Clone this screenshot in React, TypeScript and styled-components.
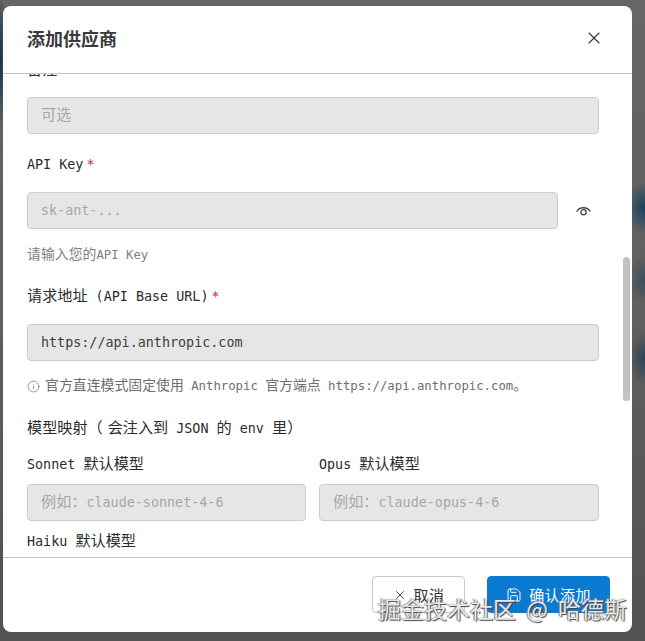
import React from "react";
import styled, { createGlobalStyle } from "styled-components";
import { X, Info, Save } from "lucide-react";

const Global = createGlobalStyle`
  html, body { margin: 0; padding: 0; }
  body { width: 645px; height: 641px; overflow: hidden; }
`;
const MONO = `"DejaVu Sans Mono", "Noto Sans CJK SC", monospace`;

const Backdrop = styled.div`
  position: relative; width: 645px; height: 641px; box-sizing: border-box; padding: 6px 13px 9px 3px;
  background:
    radial-gradient(ellipse 20px 26px at 645px 208px, #17425f 0%, #17425f00 100%),
    radial-gradient(ellipse 16px 24px at 645px 280px, #3a4c5c 0%, #3a4c5c00 100%),
    radial-gradient(ellipse 16px 26px at 645px 358px, #2a4557 0%, #2a455700 100%),
    radial-gradient(ellipse 8px 70px at 0 60px, #0f3350 0%, #0f335000 100%),
    linear-gradient(#666 0%, #5f5f5f 50%, #525252 100%);
`;
const Modal = styled.div`
  width: 629px; height: 626px; background: #fff; border-radius: 8px; display: flex; flex-direction: column; overflow: hidden;
`;
const Header = styled.header`
  height: 68px; flex: none; box-sizing: border-box; display: flex; align-items: center; justify-content: space-between;
  padding: 0 28px 4px 24px; border-bottom: 1px solid #c4c4c4;
`;
const Title = styled.h2`
  margin: 0; font: 700 18px "Noto Sans CJK SC", sans-serif; color: #3a3a3a;
`;
const Body = styled.div`
  position: relative; flex: 1; overflow: hidden; padding: 0 0 0 24px; font-family: ${MONO};
`;
const Content = styled.div`
  margin-top: -13px;
`;
const Han = styled.span`
  font-size: 1.13em; line-height: 1;
`;
const ParenGap = styled(Han)`
  margin-right: 5px;
`;
const Label = styled.div<{ $mb?: number }>`
  font-size: 13.4px; line-height: 20px; color: #2c2c2c; margin-bottom: ${p => p.$mb ?? 17}px; white-space: pre;
`;
const Star = styled.span`
  color: #d9243a; margin-left: 3px;
`;
const Field = styled.div<{ $w?: number; $value?: boolean }>`
  width: ${p => p.$w ?? 572}px; height: 37px; box-sizing: border-box; background: #e6e6e6; border: 1px solid #cdcdcd; border-radius: 4px;
  padding: 0 13px; font-size: 13.4px; line-height: 35px; white-space: pre;
  color: ${p => (p.$value ? "#3d3d3d" : "#a6a6a6")};
`;
const KeyRow = styled.div`
  display: flex; align-items: center; gap: 18px; color: #444;
`;
const Group = styled.div<{ $mt: number }>`
  margin-top: ${p => p.$mt}px;
`;
const Help = styled.div`
  margin-top: 17px; font-size: 12.3px; line-height: 18px; color: #808080; white-space: pre;
`;
const Note = styled.div`
  margin-top: 16px; display: flex; align-items: center; gap: 5px; font-size: 12.3px; line-height: 18px; color: #6e6e6e; white-space: pre;
`;
const Grid = styled.div`
  margin-top: 16px; width: 572px; display: grid; grid-template-columns: 279px 280px; column-gap: 13px;
`;
const Scroll = styled.div`
  position: absolute; left: 620px; top: 183px; width: 7px; height: 144px; border-radius: 4px; background: #c2c2c2;
`;
const Footer = styled.footer`
  height: 75px; flex: none; box-sizing: border-box; border-top: 1px solid #c4c4c4; display: flex; justify-content: flex-end;
  gap: 22px; padding: 18px 22px 0 0;
`;
const Btn = styled.button<{ $primary?: boolean }>`
  height: 37px; box-sizing: border-box; border-radius: 4px; display: flex; align-items: center; justify-content: center; gap: 7px;
  font: 15px "Noto Sans CJK SC", sans-serif; padding: 0; letter-spacing: 0.4px;
  width: ${p => (p.$primary ? 123 : 93)}px;
  background: ${p => (p.$primary ? "#0b7ad1" : "#fff")};
  color: ${p => (p.$primary ? "#fff" : "#333")};
  border: 1px solid ${p => (p.$primary ? "#0b7ad1" : "#c8c8c8")};
`;
const Watermark = styled.div`
  position: absolute; left: 378px; top: 592px; font: 400 23px/32px "Noto Sans CJK SC", sans-serif; color: #e8e8e8; white-space: pre; word-spacing: 5px;
  text-shadow: 1px 1px 1px #444, -1px 0 1px #777;
`;

function EyeIcon() {
  return (
    <svg width="15" height="12" viewBox="0 0 15 12" fill="none" stroke="#444" strokeWidth="1.3" strokeLinecap="round">
      <path d="M1 6.2 C3.4 1.6 11.6 1.6 14 6.2" />
      <circle cx="7.5" cy="7.2" r="2.6" />
    </svg>
  );
}

export default function App() {
  return (
    <Backdrop>
      <Global />
      <Modal>
        <Header>
          <Title>添加供应商</Title>
          <X size={20} color="#333" strokeWidth={1.3} />
        </Header>
        <Body>
          <Content>
            <Label $mb={16}><Han>备注</Han></Label>
            <Field><Han>可选</Han></Field>
            <Group $mt={21}>
              <Label>API Key<Star>*</Star></Label>
              <KeyRow>
                <Field $w={531}>sk-ant-...</Field>
                <EyeIcon />
              </KeyRow>
              <Help><Han>请输入您的</Han>API Key</Help>
            </Group>
            <Group $mt={23}>
              <Label><Han>请求地址</Han> (API Base URL)<Star>*</Star></Label>
              <Field $value>https://api.anthropic.com</Field>
              <Note>
                <Info size={13} strokeWidth={1.3} />
                <span><Han>官方直连模式固定使用</Han> Anthropic <Han>官方端点</Han> https://api.anthropic.com<Han>。</Han></span>
              </Note>
            </Group>
            <Group $mt={24}>
              <Label $mb={0}><Han>模型映射</Han><ParenGap>（</ParenGap><Han>会注入到</Han> JSON <Han>的</Han> env <Han>里）</Han></Label>
            </Group>
            <Grid>
              <div>
                <Label $mb={9}>Sonnet <Han>默认模型</Han></Label>
                <Field $w={279}><Han>例如：</Han>claude-sonnet-4-6</Field>
              </div>
              <div>
                <Label $mb={9}>Opus <Han>默认模型</Han></Label>
                <Field $w={280}><Han>例如：</Han>claude-opus-4-6</Field>
              </div>
            </Grid>
            <Group $mt={11}>
              <Label $mb={0}>Haiku <Han>默认模型</Han></Label>
            </Group>
          </Content>
          <Scroll />
        </Body>
        <Footer>
          <Btn><X size={14} strokeWidth={1.5} />取消</Btn>
          <Btn $primary><Save size={16} strokeWidth={1.5} />确认添加</Btn>
        </Footer>
      </Modal>
      <Watermark>掘金技术社区 @ 哈德斯</Watermark>
    </Backdrop>
  );
}
